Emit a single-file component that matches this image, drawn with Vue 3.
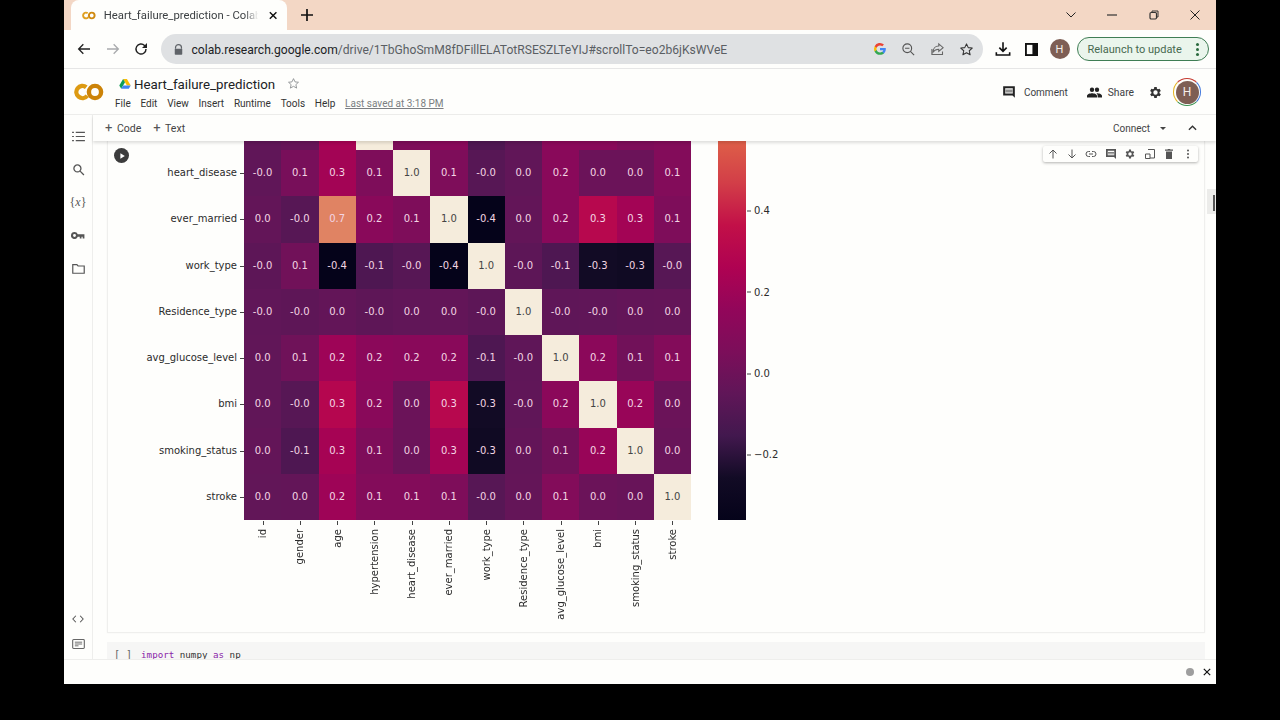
<script setup>
const names = ['id','gender','age','hypertension','heart_disease','ever_married','work_type','Residence_type','avg_glucose_level','bmi','smoking_status','stroke']
const matrix = [
  [-0.001,0.085,0.26,0.11,1,0.11,-0.03,0.003,0.16,0.04,0.04,0.13],
  [0.01,-0.03,0.68,0.16,0.11,1,-0.36,0.01,0.16,0.34,0.26,0.11],
  [-0.01,0.06,-0.36,-0.06,-0.03,-0.36,1,-0.01,-0.06,-0.3,-0.31,-0.03],
  [-0.001,-0.006,0.01,-0.008,0.003,0.01,-0.01,1,-0.005,-0.001,0.01,0.015],
  [0.005,0.055,0.24,0.17,0.16,0.16,-0.06,-0.005,1,0.17,0.06,0.13],
  [0.003,-0.03,0.33,0.16,0.04,0.34,-0.3,-0.001,0.17,1,0.22,0.04],
  [0.01,-0.06,0.27,0.11,0.04,0.26,-0.31,0.01,0.06,0.22,1,0.03],
  [0.006,0.009,0.24,0.13,0.13,0.11,-0.03,0.015,0.13,0.04,0.03,1]
]
const topRow = [0.003,0.02,0.28,1,0.11,0.16,-0.06,-0.008,0.17,0.16,0.11,0.13]
const stops = [[-0.36,[5,3,26]],[-0.3,[18,11,37]],[-0.1,[66,24,78]],[0,[96,22,88]],[0.1,[124,14,90]],[0.2,[146,6,90]],[0.3,[175,2,82]],[0.4,[194,16,72]],[0.57,[222,95,72]],[0.7,[224,138,104]],[1,[245,236,220]]]
function color(v) {
  for (let i = 1; i < stops.length; i++) {
    if (v <= stops[i][0]) {
      const [a, ca] = stops[i - 1], [b, cb] = stops[i]
      const t = Math.max(0, (v - a) / (b - a))
      return `rgb(${ca.map((c, k) => Math.round(c + (cb[k] - c) * t)).join(',')})`
    }
  }
  return 'rgb(245,236,220)'
}
const gradient = `linear-gradient(to bottom, ${[0.57,0.5,0.4,0.3,0.2,0.1,0,-0.1,-0.3,-0.36].map(color).join(',')})`
const cbTicks = [{ label: '0.4', y: 69 }, { label: '0.2', y: 150.5 }, { label: '0.0', y: 232 }, { label: '−0.2', y: 313 }]
const rows = matrix.map((r, i) => ({ name: names[i + 4], cells: r }))
const menu = ['File','Edit','View','Insert','Runtime','Tools','Help']
</script>

<template>
  <div class="shell">
    <div class="tabstrip">
      <div class="tab">
        <svg class="tab-logo" viewBox="0 0 24 14" width="15" height="9"><circle cx="7" cy="7" r="5" fill="none" stroke="#e0a020" stroke-width="3.4" stroke-dasharray="23 8" transform="rotate(35 7 7)"/><circle cx="17" cy="7" r="5" fill="none" stroke="#d08a10" stroke-width="3.4"/></svg>
        <span class="tab-title">Heart_failure_prediction - Colab</span>
        <svg class="tab-x" viewBox="0 0 10 10" width="9" height="9"><path d="M1 1l8 8M9 1l-8 8" stroke="#111" stroke-width="1.7"/></svg>
      </div>
      <svg class="tab-plus" viewBox="0 0 12 12" width="12" height="12"><path d="M6 0v12M0 6h12" stroke="#111" stroke-width="1.7"/></svg>
      <div class="winbtns">
        <svg viewBox="0 0 10 6" width="10" height="6"><path d="M.5.5L5 5 9.500.5" fill="none" stroke="#222" stroke-width="1"/></svg>
        <svg viewBox="0 0 10 2" width="10" height="2"><path d="M0 1h10" stroke="#333" stroke-width="1.2"/></svg>
        <svg viewBox="0 0 10 10" width="10" height="10"><path d="M3 2.500V1h6v6H7.500" fill="none" stroke="#333"/><rect x="1" y="2.500" width="6.500" height="6.500" rx="1.200" fill="none" stroke="#333" stroke-width="1.200"/></svg>
        <svg viewBox="0 0 10 10" width="10" height="10"><path d="M.5.5l9 9M9.500.5l-9 9" stroke="#222" stroke-width="1"/></svg>
      </div>
    </div>

    <div class="toolbar">
      <svg class="nav" viewBox="0 0 24 24" width="16" height="16"><path d="M21 12H4M11 5l-7 7 7 7" fill="none" stroke="#222" stroke-width="2"/></svg>
      <svg class="nav" viewBox="0 0 24 24" width="16" height="16"><path d="M3 12h17M13 5l7 7-7 7" fill="none" stroke="#a9abad" stroke-width="2"/></svg>
      <svg class="nav" viewBox="0 0 24 24" width="16" height="16"><path d="M19.500 12a7.500 7.500 0 1 1-2.200-5.300L20 9.500" fill="none" stroke="#222" stroke-width="2.200"/><path d="M21 3v7.500h-7.500z" fill="#222"/></svg>
      <div class="omnibox">
        <svg viewBox="0 0 12 14" width="9" height="11"><path d="M2 6V4.500a4 4 0 0 1 8 0V6" fill="none" stroke="#5f6368" stroke-width="1.600"/><rect x="1" y="6" width="10" height="8" rx="1" fill="#5f6368"/></svg>
        <span class="url"><b>colab.research.google.com</b>/drive/1TbGhoSmM8fDFillELATotRSESZLTeYIJ#scrollTo=eo2b6jKsWVeE</span>
        <svg class="omni-i g" viewBox="0 0 24 24" width="14" height="14"><path d="M22 12.200c0-.7-.1-1.400-.2-2H12v3.900h5.600c-.2 1.300-1 2.400-2.100 3.100v2.600h3.300c2-1.800 3.200-4.500 3.200-7.600z" fill="#4285f4"/><path d="M12 22c2.800 0 5.100-.9 6.800-2.500l-3.300-2.600c-.9.600-2.100 1-3.500 1-2.700 0-5-1.800-5.800-4.300H2.800v2.600A10 10 0 0 0 12 22z" fill="#34a853"/><path d="M6.200 13.600a6 6 0 0 1 0-3.800V7.200H2.800a10 10 0 0 0 0 9z" fill="#fbbc05"/><path d="M12 5.800c1.500 0 2.900.5 3.900 1.500l2.900-2.900A10 10 0 0 0 2.800 7.200l3.400 2.600C7 7.600 9.300 5.800 12 5.800z" fill="#ea4335"/></svg>
        <svg class="omni-i" viewBox="0 0 24 24" width="15" height="15"><circle cx="10" cy="10" r="7" fill="none" stroke="#555" stroke-width="1.800"/><path d="M15 15l6 6M6.500 10h7" stroke="#555" stroke-width="1.800"/></svg>
        <svg class="omni-i" viewBox="0 0 24 24" width="15" height="15"><path d="M3 11v9h17v-5M14 3l7 6-7 6v-3.500c-4.500 0-7 1.500-9 4.500 0-5 3-9.500 9-9.500z" fill="none" stroke="#666" stroke-width="1.700"/></svg>
        <svg class="omni-i" viewBox="0 0 24 24" width="15" height="15"><path d="M12 3l2.800 6 6.400.7-4.800 4.300 1.400 6.500L12 17.200 6.200 20.500 7.600 14 2.800 9.700 9.200 9z" fill="none" stroke="#333" stroke-width="1.700" stroke-linejoin="round"/></svg>
      </div>
      <svg class="tb-i" viewBox="0 0 24 24" width="16" height="16"><path d="M12 2v13M6.500 10l5.500 5.500 5.500-5.500M2 17v4h20v-4" fill="none" stroke="#111" stroke-width="2.400"/></svg>
      <svg class="tb-i" viewBox="0 0 14 14" width="13" height="13"><rect x="1" y="1" width="12" height="12" fill="none" stroke="#111" stroke-width="2"/><rect x="8" y="1" width="5" height="12" fill="#111"/></svg>
      <span class="avatar small">H</span>
      <div class="relaunch"><span>Relaunch to update</span><i></i></div>
    </div>

    <div class="colab-head">
      <svg class="co-logo" viewBox="0 0 30 18" width="30" height="18"><circle cx="8.500" cy="9" r="6.100" fill="none" stroke="#dd9a12" stroke-width="4.400" stroke-dasharray="28 11" transform="rotate(38 8.500 9)"/><circle cx="21" cy="9" r="6.100" fill="none" stroke="#cc8308" stroke-width="4.400"/></svg>
      <div class="title-block">
        <div class="title-line">
          <svg viewBox="0 0 24 21" width="12" height="10"><path d="M8 0h8l8 13.500h-8z" fill="#fbbc04"/><path d="M8 0L0 13.500l4 7L12 7z" fill="#0f9d58"/><path d="M4 20.500h16l4-7H8z" fill="#4285f4"/></svg>
          <span class="doc-title">Heart_failure_prediction</span>
          <svg class="star" viewBox="0 0 24 24" width="13" height="13"><path d="M12 3l2.800 6 6.400.7-4.800 4.300 1.400 6.500L12 17.200 6.200 20.500 7.600 14 2.800 9.700 9.200 9z" fill="none" stroke="#8a8d90" stroke-width="1.600"/></svg>
        </div>
        <div class="menu">
          <span v-for="m in menu" :key="m">{{ m }}</span>
          <span class="saved">Last saved at 3:18 PM</span>
        </div>
      </div>
      <div class="head-actions">
        <span class="act comment"><svg viewBox="0 0 24 24" width="14" height="14"><path d="M2 2h20v20l-4-4H2zm3.500 3.500v9h13v-9z" fill="#222" fill-rule="evenodd"/><path d="M6 8h12v1.500H6zM6 11h12v1.500H6z" fill="#222"/></svg>Comment</span>
        <span class="act share"><svg viewBox="0 0 24 24" width="15" height="15"><path d="M16 11a3.500 3.500 0 1 0 0-7 3.500 3.500 0 0 0 0 7zm-8 0a3.500 3.500 0 1 0 0-7 3.500 3.500 0 0 0 0 7zm0 2c-2.700 0-8 1.300-8 4v3h16v-3c0-2.700-5.300-4-8-4zm8 0h-1c1.200.9 2 2.200 2 4v3h7v-3c0-2.700-5.300-4-8-4z" fill="#222"/></svg>Share</span>
        <svg class="gear" viewBox="0 0 24 24" width="15" height="15"><path d="M19.400 13a7.500 7.500 0 0 0 0-2l2.100-1.600-2-3.500-2.500 1a7.300 7.300 0 0 0-1.700-1L15 3.200h-4l-.4 2.700c-.6.200-1.200.6-1.700 1l-2.500-1-2 3.500L6.500 11a7.500 7.500 0 0 0 0 2l-2.100 1.600 2 3.500 2.500-1c.5.400 1.100.7 1.700 1l.4 2.700h4l.4-2.700c.6-.3 1.200-.6 1.700-1l2.500 1 2-3.500zM13 15.500a3.500 3.500 0 1 1 0-7 3.500 3.500 0 0 1 0 7z" fill="#333" transform="translate(-1 0)"/></svg>
        <span class="ring"><span class="avatar">H</span></span>
      </div>
    </div>

    <div class="workspace">
      <aside class="sidebar">
        <span class="side-i"><svg viewBox="0 0 14 12" width="13" height="11"><path d="M0 1.500h2M4 1.500h10M0 6h2M4 6h10M0 10.500h2M4 10.500h10" stroke="#555" stroke-width="1.300"/></svg></span>
        <span class="side-i"><svg viewBox="0 0 24 24" width="13" height="13"><circle cx="10" cy="10" r="6.500" fill="none" stroke="#555" stroke-width="2.400"/><path d="M15 15l7 7" stroke="#555" stroke-width="2.400"/></svg></span>
        <span class="side-i xvar">{<em>x</em>}</span>
        <span class="side-i"><svg viewBox="0 0 24 12" width="14" height="7"><path d="M6 0a6 6 0 1 0 5.600 8H15v3h3V8h2v3h3V4H11.600A6 6 0 0 0 6 0zm0 3.500a2.500 2.500 0 1 1 0 5 2.500 2.500 0 0 1 0-5z" fill="#555" fill-rule="evenodd"/></svg></span>
        <span class="side-i"><svg viewBox="0 0 14 11" width="13" height="10"><path d="M.7.700h4.500l1.300 1.500h6.800v8H.7z" fill="none" stroke="#555" stroke-width="1.300"/></svg></span>
        <div class="side-bottom">
          <svg viewBox="0 0 14 9" width="12" height="8"><path d="M4.500.700L1 4.500l3.500 3.800M9.500.700L13 4.500 9.500 8.300" fill="none" stroke="#555" stroke-width="1.200"/></svg>
          <svg viewBox="0 0 14 11" width="13" height="10"><rect x=".6" y=".6" width="12.800" height="9.800" rx="1" fill="none" stroke="#666" stroke-width="1.200"/><path d="M3 3.500h8M3 5.500h8M3 7.500h4" stroke="#666"/></svg>
        </div>
      </aside>

      <div class="nb">
        <div class="nb-toolbar">
          <span class="add"><i>+</i> Code</span>
          <span class="add"><i>+</i> Text</span>
          <span class="connect">Connect<b></b></span>
          <svg class="chev" viewBox="0 0 10 6" width="9" height="6"><path d="M1 5l4-4 4 4" fill="none" stroke="#333" stroke-width="1.500"/></svg>
        </div>

        <div class="scroller">
          <section class="output-cell">
            <span class="play"><svg viewBox="0 0 10 10" width="8" height="8"><path d="M3 1.500l5.500 3.500L3 8.500z" fill="#fff"/></svg></span>
            <div class="figure">
              <div class="fig-top">
                <div class="ylabels">
                  <div v-for="r in rows" :key="r.name" class="ylabel">{{ r.name }}</div>
                </div>
                <div class="heat">
                  <div v-for="(v, i) in topRow" :key="'t' + i" :style="{ background: color(v) }"></div>
                  <template v-for="r in rows" :key="r.name">
                    <div v-for="(v, i) in r.cells" :key="i" class="cell" :class="{ diag: v === 1 }" :style="{ background: color(v) }">{{ v.toFixed(1) }}</div>
                  </template>
                </div>
                <div class="cbar" :style="{ background: gradient }">
                  <span v-for="t in cbTicks" :key="t.label" class="cb-tick" :style="{ top: t.y + 'px' }">{{ t.label }}</span>
                </div>
              </div>
              <div class="xlabels">
                <div v-for="n in names" :key="n" class="xlabel"><span>{{ n }}</span></div>
              </div>
            </div>
            <div class="cell-tools">
              <svg viewBox="0 0 24 24" width="12" height="12"><path d="M12 21V4M5 11l7-7 7 7" fill="none" stroke="#555" stroke-width="2"/></svg>
              <svg viewBox="0 0 24 24" width="12" height="12"><path d="M12 3v17M5 13l7 7 7-7" fill="none" stroke="#555" stroke-width="2"/></svg>
              <svg viewBox="0 0 24 24" width="12" height="12"><path d="M10 7H7a5 5 0 0 0 0 10h3M14 7h3a5 5 0 0 1 0 10h-3M8 12h8" fill="none" stroke="#555" stroke-width="2"/></svg>
              <svg viewBox="0 0 24 24" width="12" height="12"><path d="M2 2h20v20l-4-4H2zm3.500 3.500v9h13v-9z" fill="#555" fill-rule="evenodd"/><path d="M6 8h12v1.500H6zM6 11h12v1.500H6z" fill="#555"/></svg>
              <svg viewBox="0 0 24 24" width="12" height="12"><path d="M19.400 13a7.500 7.500 0 0 0 0-2l2.100-1.600-2-3.500-2.500 1a7.300 7.300 0 0 0-1.700-1L15 3.200h-4l-.4 2.700c-.6.200-1.200.6-1.700 1l-2.500-1-2 3.500L6.500 11a7.500 7.500 0 0 0 0 2l-2.100 1.600 2 3.500 2.500-1c.5.400 1.100.7 1.700 1l.4 2.700h4l.4-2.700c.6-.3 1.200-.6 1.700-1l2.500 1 2-3.500zM13 15.500a3.500 3.500 0 1 1 0-7 3.500 3.500 0 0 1 0 7z" fill="#555" transform="translate(-1 0)"/></svg>
              <svg viewBox="0 0 24 24" width="12" height="12"><path d="M8 3h13v17H12M3 12h9v9H3z" fill="none" stroke="#555" stroke-width="2"/></svg>
              <svg viewBox="0 0 24 24" width="12" height="12"><path d="M6 7h12v15H6zM4 3h5l1-1h4l1 1h5v2.500H4z" fill="#555"/></svg>
              <svg viewBox="0 0 24 24" width="12" height="12"><circle cx="12" cy="5" r="2" fill="#555"/><circle cx="12" cy="12" r="2" fill="#555"/><circle cx="12" cy="19" r="2" fill="#555"/></svg>
            </div>
          </section>
          <section class="code-cell">
            <span class="brackets">[ ]</span>
            <code><span class="kw">import</span> numpy <span class="kw">as</span> np</code>
          </section>
          <span class="thumb"><i></i></span>
        </div>
      </div>
    </div>

    <div class="status">
      <span class="dot"></span>
      <svg viewBox="0 0 10 10" width="8" height="8"><path d="M1 1l8 8M9 1l-8 8" stroke="#111" stroke-width="1.500"/></svg>
    </div>
  </div>
</template>

<style>
html, body { background: #000; margin: 0; overflow: hidden; }
</style>

<style scoped>
.shell {
  width: 1152px; height: 684px; margin-left: 64px; background: #fefefc;
  display: flex; flex-direction: column; overflow: hidden;
  font-family: Roboto, "Liberation Sans", sans-serif; color: #333;
}
.tabstrip { height: 30px; background: #f3d7c5; display: flex; align-items: center; padding-left: 7px; flex: none; }
.tab { width: 216px; height: 30px; background: #fefefc; border-radius: 8px 8px 0 0; display: flex; align-items: center; padding: 0 10px 0 11px; box-sizing: border-box; }
.tab-title { font-size: 11.300px; margin-left: 8px; width: 156px; flex: none; white-space: nowrap; color: #3c4043; -webkit-mask-image: linear-gradient(to right, #000 90%, transparent 99%); mask-image: linear-gradient(to right, #000 90%, transparent 99%); }
.tab-x { margin-left: 9px; }
.tab-plus { margin-left: 14px; }
.winbtns { margin-left: auto; display: flex; align-items: center; gap: 31.300px; padding-right: 16px; }
.toolbar { height: 38px; flex: none; display: flex; align-items: center; border-bottom: 1px solid #e6e6e6; box-sizing: content-box; padding-left: 12px; }
.nav { margin-right: 12.500px; }
.omnibox { width: 822px; height: 30px; margin-left: -1px; background: #dfe1e3; border-radius: 15px; display: flex; align-items: center; padding-left: 13px; box-sizing: border-box; }
.url { font-size: 12.100px; color: #5a5e63; margin-left: 9px; padding-top: 1px; white-space: nowrap; width: 622px; flex: none; }
.url b { font-weight: 400; color: #202124; }
.omni-i { margin-left: 14px; flex: none; }
.omni-i.g { margin-left: 59px; }
.tb-i { margin-left: 12px; }
.tb-i + .tb-i { margin-left: 14px; }
.avatar { width: 20px; height: 20px; border-radius: 50%; background: #7e5e54; color: #f5eeea; font-size: 11px; display: flex; align-items: center; justify-content: center; }
.avatar.small { margin-left: 12px; }
.relaunch { margin-left: 7px; width: 132px; height: 24px; box-sizing: border-box; border: 1px solid #3f7d54; border-radius: 12px; background: #eaf5ec; display: flex; align-items: center; padding-left: 10px; font-size: 11px; color: #47694f; }
.relaunch i { width: 3px; height: 3px; border-radius: 50%; background: #2a6a3e; margin-left: 14px; box-shadow: 0 -5px 0 #2a6a3e, 0 5px 0 #2a6a3e; }
.colab-head { height: 46px; flex: none; display: flex; align-items: center; border-bottom: 1px solid #ededeb; box-sizing: border-box; padding-left: 10px; position: relative; }
.title-block { margin-left: 15px; display: flex; flex-direction: column; gap: 3px; padding-top: 2px; }
.title-line { display: flex; align-items: center; height: 18px; }
.doc-title { font-size: 13.300px; color: #202124; margin-left: 3px; }
.star { margin-left: 12px; margin-bottom: 2px; }
.menu { display: flex; font-size: 10px; gap: 9.750px; color: #333; margin-left: -4px; height: 14px; align-items: center; }
.saved { color: #7b7e82; text-decoration: underline; }
.head-actions { margin-left: auto; display: flex; align-items: center; padding-right: 15px; padding-top: 1px; font-size: 10.300px; }
.act { display: flex; align-items: center; gap: 6px; color: #3c4043; }
.comment { margin-right: 19px; gap: 8px; font-size: 10px; }
.share { margin-right: 14px; }
.gear { margin-right: 10px; }
.ring { width: 28px; height: 28px; border-radius: 50%; box-sizing: border-box; border: 1.500px solid; border-color: #c5392f #3f76dc #38914f #e4b21f; display: flex; align-items: center; justify-content: center; background: #fefefc; }
.ring .avatar { width: 23px; height: 23px; font-size: 12px; }
.workspace { flex: 1; display: flex; min-height: 0; }
.sidebar { width: 29px; flex: none; box-sizing: border-box; border-right: 1px solid #eeeeec; display: flex; flex-direction: column; align-items: center; gap: 19.300px; padding: 14px 0 0 0; background: #fefefc; }
.side-i { flex: none; height: 14px; display: flex; align-items: center; justify-content: center; }
.xvar { font-family: "Liberation Serif", serif; font-size: 12px; color: #555; }
.side-bottom { margin-top: auto; display: flex; flex-direction: column; align-items: center; gap: 16px; padding-bottom: 10px; }
.nb { flex: 1; min-width: 0; display: flex; flex-direction: column; position: relative; }
.nb-toolbar { height: 26px; flex: none; display: flex; align-items: center; font-size: 10.500px; color: #444; box-shadow: 0 2px 3px rgba(0,0,0,.13); position: relative; z-index: 2; padding-left: 12px; background: #fefefc; }
.add { margin-right: 12px; margin-top: -2px; }
.add i { font-style: normal; font-size: 13px; margin-right: 2px; color: #555; }
.connect { margin-left: auto; display: flex; align-items: center; font-size: 10px; }
.connect b { width: 0; height: 0; border: 3.500px solid transparent; border-top: 3.500px solid #444; border-bottom: 0; margin-left: 10px; }
.chev { margin: 0 19px 0 22px; }
.scroller { flex: 1; overflow: hidden; padding: 0 11px 0 14px; display: flex; flex-direction: column; }
.output-cell { height: 492px; flex: none; position: relative; box-sizing: border-box; border: 1px solid #efefed; border-top: 0; display: flex; box-shadow: 0 0 2px rgba(0,0,0,.04); }
.play { position: absolute; left: 6px; top: 7px; width: 15px; height: 15px; border-radius: 50%; background: #3c3c3c; display: flex; align-items: center; justify-content: center; }
.figure { display: flex; flex-direction: column; }
.fig-top { display: flex; }
.ylabels { width: 136px; flex: none; padding-top: 9px; box-sizing: border-box; font-family: "DejaVu Sans", sans-serif; }
.ylabel { height: 46.250px; display: flex; align-items: center; justify-content: flex-end; font-size: 10px; color: #2b2b2b; position: relative; padding: 0 7px 1px 0; box-sizing: border-box; }
.ylabel::after { content: ""; position: absolute; right: 0; top: 50%; width: 4px; height: 1px; background: #444; }
.heat { width: 447px; height: 379px; display: grid; grid-template-columns: repeat(12, 1fr); grid-template-rows: 9px repeat(8, 1fr); flex: none; }
.cell { display: flex; align-items: center; justify-content: center; padding-bottom: 1px; font-family: "DejaVu Sans", sans-serif; font-size: 10px; color: #f3d5e3; }
.cell.diag { color: #444; }
.cbar { width: 28px; height: 379px; margin-left: 27px; position: relative; flex: none; }
.cb-tick { position: absolute; left: 29px; font-family: "DejaVu Sans", sans-serif; font-size: 10px; color: #2b2b2b; padding-left: 7px; transform: translateY(-50%); white-space: nowrap; }
.cb-tick::before { content: ""; position: absolute; left: 0; top: 50%; width: 4px; height: 1px; background: #444; }
.xlabels { display: grid; grid-template-columns: repeat(12, 37.250px); margin-left: 136px; font-family: "DejaVu Sans", sans-serif; }
.xlabel { display: flex; justify-content: center; align-items: flex-start; padding-top: 9px; font-size: 10px; color: #2b2b2b; position: relative; }
.xlabel::before { content: ""; position: absolute; top: 1px; left: 50%; width: 1px; height: 4px; background: #444; }
.xlabel span { writing-mode: vertical-rl; transform: rotate(180deg); white-space: nowrap; }
.cell-tools { position: absolute; top: 5px; right: 6px; width: 155px; height: 16px; background: #fefefc; box-shadow: 0 1px 3px rgba(0,0,0,.3); border-radius: 2px; display: flex; align-items: center; justify-content: space-around; box-sizing: border-box; }
.code-cell { margin-top: 9px; height: 18px; flex: none; background: #f6f6f5; display: flex; align-items: flex-start; padding: 7px 0 0 7px; box-sizing: border-box; font-family: "DejaVu Sans Mono", monospace; font-size: 9.200px; line-height: 11px; color: #333; }
.brackets { color: #666; margin-right: 9px; font-size: 10px; }
.code-cell code { font-family: inherit; }
.kw { color: #8a1fa8; }
.thumb { position: absolute; right: 0; top: 74px; width: 9px; height: 25px; background: #ececea; }
.thumb i { position: absolute; right: 1px; top: 6px; width: 2px; height: 16px; background: #555; }
.status { height: 25px; flex: none; border-top: 1px solid #eeeeec; box-sizing: border-box; background: #fefefc; display: flex; align-items: center; justify-content: flex-end; gap: 9px; padding-right: 5px; position: relative; z-index: 3; }
.dot { width: 8px; height: 8px; border-radius: 50%; background: #9e9e9e; }
</style>
